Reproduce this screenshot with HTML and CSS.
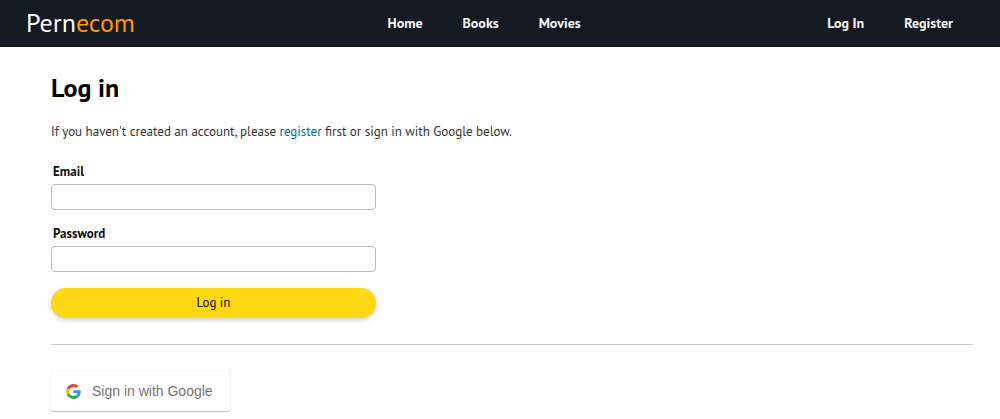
FILE: index.html
```html
<!DOCTYPE html>
<html lang="en">
<head>
<meta charset="utf-8">
<meta name="viewport" content="width=device-width, initial-scale=1">
<title>Pernecom - Log in</title>
<link rel="stylesheet" href="styles.css">
</head>
<body>
<header class="navbar">
  <a class="brand" href="#">Pern<span class="brand-accent">ecom</span></a>
  <nav class="nav-links" aria-label="Main">
    <a class="nav-link" href="#">Home</a>
    <a class="nav-link" href="#">Books</a>
    <a class="nav-link" href="#">Movies</a>
  </nav>
  <nav class="nav-links" aria-label="Account">
    <a class="nav-link" href="#">Log In</a>
    <a class="nav-link" href="#">Register</a>
  </nav>
</header>
<main class="page">
  <h1 class="title">Log in</h1>
  <p class="intro">If you haven't created an account, please <a class="link" href="#">register</a> first or sign in with Google below.</p>
  <form class="login-form">
    <div class="field">
      <label class="label" for="email">Email</label>
      <input class="input" id="email" type="email">
    </div>
    <div class="field">
      <label class="label" for="password">Password</label>
      <input class="input" id="password" type="password">
    </div>
    <button class="submit" type="submit">Log in</button>
  </form>
  <hr class="divider">
  <button class="google" type="button">
    <svg class="google-icon" viewBox="0 0 48 48" aria-hidden="true">
      <path fill="#ea4335" d="M24 9.5c3.54 0 6.71 1.22 9.21 3.6l6.85-6.85C35.9 2.38 30.47 0 24 0 14.62 0 6.51 5.38 2.56 13.22l7.98 6.19C12.43 13.72 17.74 9.5 24 9.5z"/>
      <path fill="#4285f4" d="M46.98 24.55c0-1.57-.15-3.09-.38-4.55H24v9.02h12.94c-.58 2.96-2.26 5.48-4.78 7.18l7.73 6c4.51-4.18 7.09-10.36 7.09-17.65z"/>
      <path fill="#fbbc05" d="M10.53 28.59c-.48-1.45-.76-2.99-.76-4.59s.27-3.14.76-4.59l-7.98-6.19C.92 16.46 0 20.12 0 24s.92 7.54 2.56 10.78l7.97-6.19z"/>
      <path fill="#34a853" d="M24 48c6.48 0 11.93-2.13 15.89-5.81l-7.73-6c-2.15 1.45-4.92 2.3-8.16 2.3-6.26 0-11.57-4.22-13.47-9.91l-7.98 6.19C6.51 42.62 14.62 48 24 48z"/>
    </svg>
    <span>Sign in with Google</span>
  </button>
</main>
</body>
</html>
```
FILE: styles.css
```css
* {
  box-sizing: border-box;
}

body {
  margin: 0;
  background: #fff;
  color: #0f1111;
  font-family: "PT Sans", "Open Sans", "Noto Sans", sans-serif;
  font-size: 13px;
}

.navbar {
  display: flex;
  align-items: center;
  justify-content: space-between;
  height: 47px;
  padding: 0 27px 2px 0;
  background: #131a22;
}

.brand {
  padding: 0 26px;
  color: #fff;
  font-size: 26px;
  line-height: 32px;
  text-decoration: none;
}

.brand-accent {
  color: #ff9900;
}

.nav-links {
  display: flex;
}

.nav-link {
  padding: 0 20px;
  color: #f5f5f5;
  font-size: 14px;
  font-weight: 700;
  line-height: 18px;
  text-decoration: none;
}

.page {
  padding: 24px 27px 8px 51px;
}

.title {
  margin: 0 0 18px;
  color: #000;
  font-size: 26px;
  font-weight: 700;
  line-height: 34px;
}

.intro {
  margin: 0 0 23px;
  color: #333;
  line-height: 18px;
}

.link {
  color: #007185;
  text-decoration: none;
}

.login-form {
  display: flex;
  flex-direction: column;
  gap: 16px;
  max-width: 325px;
}

.field {
  display: flex;
  flex-direction: column;
  gap: 4px;
}

.label {
  padding-left: 2px;
  font-weight: 700;
  line-height: 16px;
}

.input {
  width: 100%;
  height: 26px;
  padding: 0 8px;
  border: 1px solid #bbb;
  border-radius: 4px;
  background: #fff;
  font: inherit;
}

.submit {
  height: 30px;
  padding: 0 8px 2px;
  border: 0;
  border-radius: 15px;
  background: #ffd814;
  box-shadow: 0 2px 5px rgba(15, 17, 17, 0.2);
  color: #0f1111;
  font: inherit;
}

.divider {
  height: 1px;
  margin: 26px 0;
  border: 0;
  background: #ccc;
}

.google {
  display: flex;
  align-items: center;
  gap: 11px;
  height: 40px;
  padding: 0 17px 0 15px;
  border: 0;
  border-radius: 2px;
  background: #fff;
  box-shadow: 0 1px 1px rgba(0, 0, 0, 0.24), 0 0 1px rgba(0, 0, 0, 0.24);
  color: #757575;
  font-family: "Liberation Sans", Arial, sans-serif;
  font-size: 14px;
}

.google-icon {
  width: 15px;
  height: 15px;
}
```
